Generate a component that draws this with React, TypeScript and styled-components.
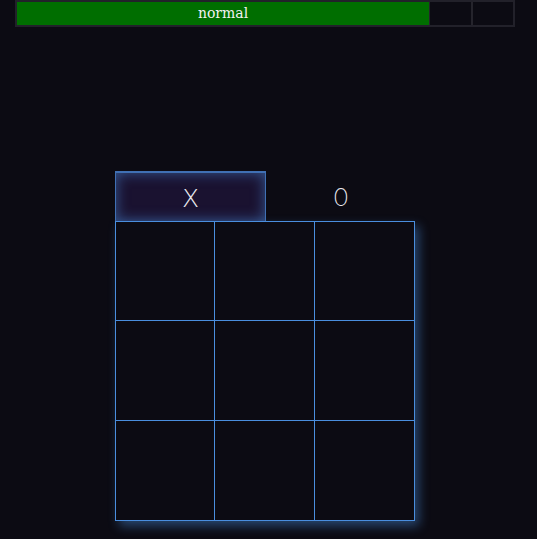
import styled, { createGlobalStyle } from "styled-components";

const GlobalStyle = createGlobalStyle`
  html, body {
    margin: 0;
    padding: 0;
    background: #0c0b13;
    height: 100%;
  }
  #root {
    min-height: 100%;
  }
`;

const cells = Array.from({ length: 9 }, (_, i) => i);

const App = () => {
  return (
    <>
      <GlobalStyle />
      <Page>
        <StatusBar>
          <Segment $kind="active">normal</Segment>
          <Segment $kind="empty" />
          <Segment $kind="empty" />
        </StatusBar>
        <Game>
          <Tabs>
            <Tab $active>
              <Glyph>X</Glyph>
            </Tab>
            <Tab>
              <Glyph $narrow>O</Glyph>
            </Tab>
          </Tabs>
          <Board>
            {cells.map((c) => (
              <Cell key={c} />
            ))}
          </Board>
        </Game>
      </Page>
    </>
  );
};

export default App;

const Page = styled.div`
  width: 500px;
  margin-left: 15px;
`;

const StatusBar = styled.div`
  display: flex;
  height: 23px;
  padding: 2px;
  background: #22212a;
`;

const Segment = styled.div<{ $kind: "active" | "empty" }>`
  flex: ${(p) => (p.$kind === "active" ? "0 0 412px" : "1 1 0")};
  background: ${(p) => (p.$kind === "active" ? "#006e00" : "#0c0b13")};
  border-left: ${(p) => (p.$kind === "active" ? "none" : "1px solid #25242c")};
  color: #f2f2f2;
  font-family: "DejaVu Serif", serif;
  font-size: 14px;
  line-height: 22px;
  text-align: center;
  & + & + & {
    border-left: 2px solid #25242c;
  }
`;

const Game = styled.div`
  display: flex;
  flex-direction: column;
  align-items: center;
  margin-top: 144px;
`;

const Tabs = styled.div`
  display: flex;
  width: 300px;
  height: 50px;
`;

const Tab = styled.div<{ $active?: boolean }>`
  flex: 1;
  display: flex;
  align-items: center;
  justify-content: center;
  box-sizing: border-box;
  padding-top: 2px;
  background: ${(p) => (p.$active ? "#1a1230" : "transparent")};
  border: ${(p) => (p.$active ? "1px solid rgba(74, 136, 214, 0.8)" : "none")};
  border-top-width: ${(p) => (p.$active ? "2px" : "0")};
  border-bottom: none;
  box-shadow: ${(p) =>
    p.$active ? "inset 0 0 14px rgba(74, 136, 214, 0.6)" : "none"};
`;

const Glyph = styled.span<{ $narrow?: boolean }>`
  display: inline-block;
  color: #ececf2;
  font-family: "DejaVu Sans", sans-serif;
  font-weight: 200;
  font-size: 25px;
  line-height: 1;
  transform: ${(p) => (p.$narrow ? "scaleX(0.78)" : "none")};
`;

const Board = styled.div`
  display: grid;
  grid-template-columns: 98px 99px 99px;
  grid-template-rows: 98px 99px 99px;
  gap: 1px;
  padding: 1px;
  width: 300px;
  box-sizing: border-box;
  background: #4a8ede;
  box-shadow: 4px 5px 10px rgba(74, 142, 222, 0.45);
`;

const Cell = styled.div`
  background: #0c0b13;
`;
